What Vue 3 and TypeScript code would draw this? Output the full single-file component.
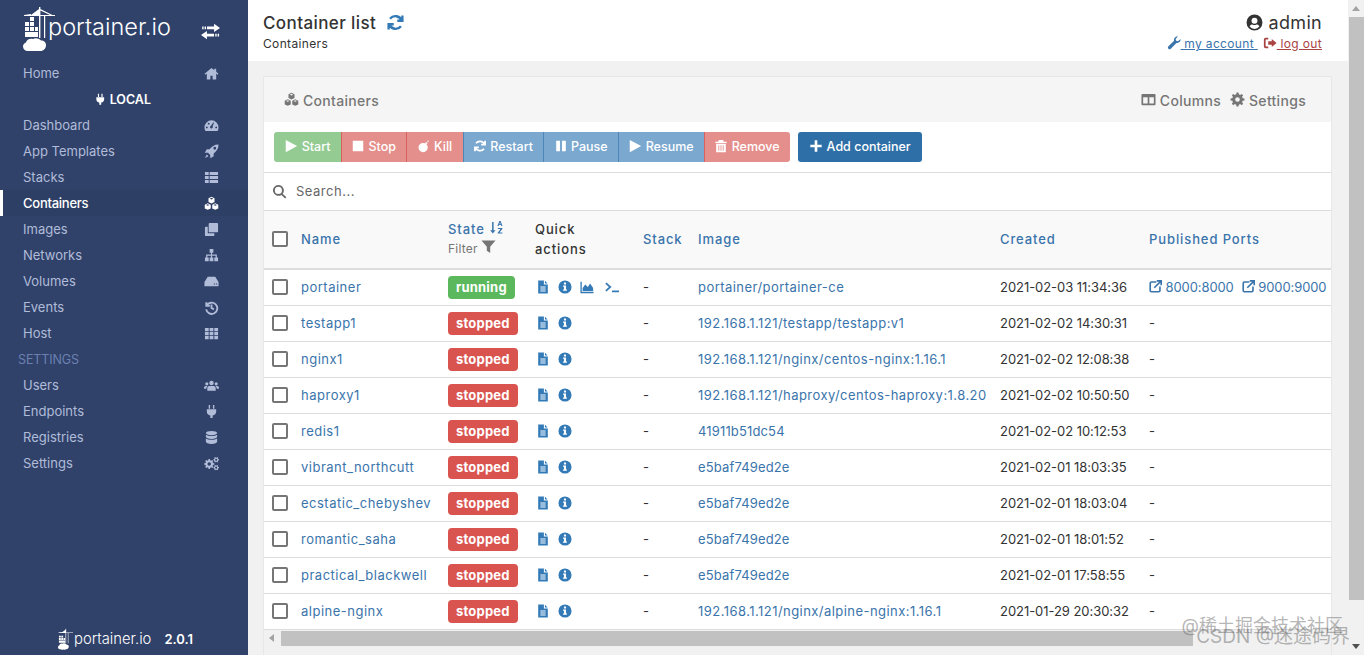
<template>
  <div class="page">
    <aside class="sidebar">
      <div class="brand">
        <svg class="logo" viewBox="0 0 32 44">
          <path d="M16 0h1.4v8H32v1H17.4v22H16V9H8v-1l8-6zM1 8l7-1v2H1zM21 9h1.2v22H21zM17.4 2l12 6h-2.4l-9.6-4.6z" />
          <path d="M2 15h4v4H2zM7 15h4v4H7zM2 20h4v4H2zM7 20h4v4H7zM12 20h3v4h-3zM2 25h13v5H2zM7 10h4v4H7z" />
          <path d="M5 44c-3 0-5-2-5-4.500 0-2 1.500-3.500 3-4 .5-3 4-4.500 7-3.500 2-1.500 6-1 8 1.500 3 0 5 2 5 4.500 0 3.500-2.500 6-5.500 6-2 1-4 1-5.500.2-2 .8-5 .8-7-.2z" />
        </svg>
        <span class="brand-text">portainer.io</span>
        <Ic n="exchange" class="toggle" />
      </div>
      <nav class="nav">
        <a v-for="item in navTop" :key="item.label" class="nav-row" :class="{ active: item.active }">
          <span>{{ item.label }}</span><Ic :n="item.icon" />
        </a>
        <div class="endpoint"><Ic n="plug" /> LOCAL</div>
        <a v-for="item in navLocal" :key="item.label" class="nav-row" :class="{ active: item.active }">
          <span>{{ item.label }}</span><Ic :n="item.icon" />
        </a>
        <div class="nav-title">SETTINGS</div>
        <a v-for="item in navSettings" :key="item.label" class="nav-row">
          <span>{{ item.label }}</span><Ic :n="item.icon" />
        </a>
      </nav>
      <div class="side-foot">
        <svg class="logo small" viewBox="0 0 32 44">
          <path d="M16 0h1.400v8H32v1H17.400v22H16V9H8v-1l8-6zM1 8l7-1v2H1zM21 9h1.200v22H21z" />
          <path d="M2 15h4v4H2zM7 15h4v4H7zM2 20h4v4H2zM7 20h4v4H7zM12 20h3v4h-3zM2 25h13v5H2z" />
          <path d="M5 44c-3 0-5-2-5-4.500 0-2 1.500-3.500 3-4 .5-3 4-4.500 7-3.500 2-1.500 6-1 8 1.500 3 0 5 2 5 4.500 0 3.500-2.500 6-5.500 6-2 1-4 1-5.500.2-2 .8-5 .8-7-.2z" />
        </svg>
        <span class="foot-text">portainer.io</span>
        <span class="version">2.0.1</span>
      </div>
    </aside>

    <main class="main">
      <header class="topbar">
        <div>
          <div class="page-title">Container list <Ic n="refresh" class="refresh" /></div>
          <div class="crumb">Containers</div>
        </div>
        <div class="user">
          <div class="user-name"><Ic n="userCircle" /> admin</div>
          <div class="user-links">
            <a class="account"><Ic n="wrench" /> my account </a>
            <a class="logout"><Ic n="signOut" /> log out</a>
          </div>
        </div>
      </header>

      <section class="widget">
        <div class="widget-head">
          <span class="widget-title"><Ic n="cubes" /> Containers</span>
          <span class="widget-tools">
            <span><Ic n="columns" /> Columns</span>
            <span><Ic n="cog" /> Settings</span>
          </span>
        </div>

        <div class="actions">
          <div class="btn-group">
            <button v-for="b in buttons" :key="b.label" class="btn" :class="b.kind"><Ic :n="b.icon" /> {{ b.label }}</button>
          </div>
          <button class="btn add"><Ic n="plus" /> Add container</button>
        </div>

        <div class="search"><Ic n="search" /> <span>Search...</span></div>

        <table class="grid">
          <colgroup>
            <col style="width: 176px" /><col style="width: 87px" /><col style="width: 108px" /><col style="width: 55px" />
            <col style="width: 302px" /><col style="width: 149px" /><col />
          </colgroup>
          <thead>
            <tr>
              <th><span class="name-cell"><i class="check"></i><a>Name</a></span></th>
              <th>
                <a>State <Ic n="sortAlpha" /></a>
                <div class="filter">Filter <Ic n="filter" /></div>
              </th>
              <th class="plain">Quick<br />actions</th>
              <th><a>Stack</a></th>
              <th><a>Image</a></th>
              <th><a>Created</a></th>
              <th><a>Published Ports</a></th>
            </tr>
          </thead>
          <tbody>
            <tr v-for="c in containers" :key="c.name">
              <td><span class="name-cell"><i class="check"></i><a class="cname">{{ c.name }}</a></span></td>
              <td><span class="badge" :class="c.state">{{ c.state }}</span></td>
              <td>
                <span class="quick">
                  <Ic n="file" /><Ic n="info" />
                  <template v-if="c.state === 'running'"><Ic n="chart" /><Ic n="terminal" class="term" /></template>
                </span>
              </td>
              <td>-</td>
              <td><a class="image" :class="{ hash: !c.image.includes('/') }">{{ c.image }}</a></td>
              <td class="date">{{ c.created }}</td>
              <td>
                <span v-if="c.ports" class="ports">
                  <a v-for="p in c.ports" :key="p"><Ic n="external" /> {{ p }}</a>
                </span>
                <template v-else>-</template>
              </td>
            </tr>
          </tbody>
        </table>

        <div class="hscroll">
          <i class="arrow-left"></i>
          <div class="hthumb"></div>
        </div>
      </section>
    </main>

    <div class="vscroll">
      <i class="arrow-up"></i>
      <div class="vthumb"></div>
      <i class="arrow-down"></i>
    </div>

    <div class="watermark">
      <div class="wm1">@稀土掘金技术社区</div>
      <div class="wm2">CSDN @迷途码界</div>
    </div>
  </div>
</template>

<script setup lang="ts">
import { h } from 'vue';
import type { FunctionalComponent } from 'vue';

// builds a gear outline, used by the cog icons
const gear = (cx: number, cy: number, r: number, teeth: number, hole: number) => {
  const pts: string[] = [];
  const step = (Math.PI * 2) / teeth;
  for (let i = 0; i < teeth; i++) {
    const a = i * step;
    [
      [a - step * 0.32, r * 0.76],
      [a - step * 0.18, r],
      [a + step * 0.18, r],
      [a + step * 0.32, r * 0.76]
    ].forEach(([t, d]) => pts.push(`${(cx + Math.cos(t) * d).toFixed(2)} ${(cy + Math.sin(t) * d).toFixed(2)}`));
  }
  return `M${pts.join('L')}zM${cx - hole} ${cy}a${hole} ${hole} 0 1 0 ${hole * 2} 0a${hole} ${hole} 0 1 0 ${-hole * 2} 0z`;
};

// little cube: hexagon with a hollow top face
const cube = (x: number, y: number) =>
  `M${x} ${y - 3.6}l3.200 1.500v4l-3.200 1.500-3.200-1.500v-4zM${x} ${y - 2.600}l-1.900.9 1.900.9 1.900-.9z`;

const icons: Record<string, { d: string; line?: boolean }> = {
  home: { d: 'M8 2 .6 8.200l.9 1L3 8v6.500h3.800v-4h2.400v4H13V8l1.500 1.200.9-1L13 6.200V3h-2v1.500z' },
  exchange: { d: 'M11 1.500 16 5l-5 3.500V6.200H5V3.800h6zM5 7.500V9.800h6v2.400H5v2.300L0 11zM1 3.800h1.200v2.400H1zM3 3.800h1.200v2.400H3zM12 9.800h1.200v2.400H12zM14 9.800h1.200v2.400H14z' },
  plug: { d: 'M5 1h1.500v4H5zM9.500 1H11v4H9.500zM3 5.500h10V8c0 2.500-1.500 4-3.800 4.300V15H6.800v-2.700C4.500 12 3 10.500 3 8z' },
  dashboard: { d: 'M8 2.500a7.500 7.500 0 0 0-7.500 7.500c0 1.500.4 2.700 1.100 3.800h12.800c.7-1.100 1.100-2.300 1.100-3.800A7.500 7.500 0 0 0 8 2.500zM7.500 8.200 9.900 4.700l.8.4-1.500 3.800a1.500 1.500 0 1 1-1.700-.7zM3 9a1 1 0 1 1 0 2 1 1 0 0 1 0-2zM5 5a1 1 0 1 1 0 2 1 1 0 0 1 0-2zM13 9a1 1 0 1 1 0 2 1 1 0 0 1 0-2z' },
  rocket: { d: 'M15.500.5c-4.500 0-7.500 2.200-9.500 5.200H3L.8 9.200l3.500.2 2.300 2.300.2 3.500L10.300 13v-3c3-2 5.200-5 5.200-9.500zM11.500 3a1.500 1.500 0 1 1 0 3 1.500 1.500 0 0 1 0-3zM3 11.200l1.800 1.800L1 15z' },
  list: { d: 'M1 2.200h4v3.200H1zM6 2.200h9v3.200H6zM1 6.400h4v3.200H1zM6 6.400h9v3.200H6zM1 10.600h4v3.200H1zM6 10.600h9v3.200H6z' },
  cubes: { d: cube(8, 4.500) + cube(4, 11.300) + cube(12, 11.300) },
  clone: { d: 'M6 1h8a1 1 0 0 1 1 1v8a1 1 0 0 1-1 1H6a1 1 0 0 1-1-1V2a1 1 0 0 1 1-1zM2 5h2v6.500a.5.5 0 0 0 .5.5H11v2a1 1 0 0 1-1 1H2a1 1 0 0 1-1-1V6a1 1 0 0 1 1-1z' },
  sitemap: { d: 'M6 1h4v4H8.600v2h5.100v3H15v4h-4v-4h1.400V8.300H8.600V10H10v4H6v-4h1.400V8.300H3.600V10H5v4H1v-4h1.300V7h5.100V5H6z' },
  hdd: { d: 'M4 3h8l3.500 5.500V13H.5V8.500zM10.400 10h1.300v1.300h-1.300zM12.700 10H14v1.300h-1.300z' },
  history: { d: 'M2.500 2.500v3.700h3.700M2.900 6a6 6 0 1 1-.6 4M8 4.700v3.800l2.600 1.500', line: true },
  th: { d: 'M1 2h4v3.500H1zM6 2h4v3.500H6zM11 2h4v3.500h-4zM1 6.300h4v3.500H1zM6 6.300h4v3.500H6zM11 6.300h4v3.500h-4zM1 10.600h4v3.500H1zM6 10.600h4v3.500H6zM11 10.600h4v3.500h-4z' },
  users: { d: 'M8 3a2.400 2.400 0 1 1 0 4.800A2.400 2.400 0 0 1 8 3zM3 4.500a1.700 1.700 0 1 1 0 3.400 1.700 1.700 0 0 1 0-3.400zM13 4.500a1.700 1.700 0 1 1 0 3.400 1.700 1.700 0 0 1 0-3.400zM5.500 8.500h5c1.300 0 2 1 2 2.500v2.500h-9V11c0-1.500.7-2.500 2-2.500zM2 8.500h1.800C3 9.200 2.500 10 2.500 11.500H0V10.500C0 9.300.8 8.500 2 8.500zM12.200 8.500H14c1.200 0 2 .8 2 2v1h-2.500c0-1.500-.5-2.300-1.300-3z' },
  database: { d: 'M8 1c3.500 0 6 1 6 2.300S11.500 5.600 8 5.600 2 4.600 2 3.300 4.500 1 8 1zM2 5c1.200 1 3.400 1.500 6 1.500S12.800 6 14 5v2.300c0 1.300-2.500 2.300-6 2.300S2 8.600 2 7.300zM2 9c1.200 1 3.400 1.500 6 1.500s4.800-.5 6-1.500v3.300c0 1.500-2.500 2.700-6 2.700s-6-1.200-6-2.700z' },
  cogs: { d: gear(5.600, 8.500, 5.400, 8, 1.900) + gear(13, 4, 3, 6, 1.100) + gear(13, 12.400, 3, 6, 1.100) },
  cog: { d: gear(8, 8, 7.500, 8, 2.500) },
  refresh: { d: 'M13.800 2.200v4.300H9.500M2.200 13.800V9.500h4.300M13.200 6.300A5.700 5.700 0 0 0 3.400 4.800M2.800 9.700a5.700 5.700 0 0 0 9.800 1.500', line: true },
  userCircle: { d: 'M8 .5a7.500 7.500 0 1 1 0 15 7.500 7.500 0 0 1 0-15zM8 3.500a2.800 2.800 0 1 0 0 5.600 2.800 2.800 0 0 0 0-5.600zM8 14a6 6 0 0 0 4.600-2.200C12 10.500 11 9.900 10 9.900c-.6.300-1.200.5-2 .5s-1.400-.2-2-.5c-1 0-2 .6-2.600 1.900A6 6 0 0 0 8 14z' },
  wrench: { d: 'M15.500 3.500c.4 2.800-2 5-4.700 4.400L4.300 14.500a1.800 1.800 0 0 1-2.700-2.700l6.500-6.500C7.500 2.500 9.800.2 12.500.6L9.800 3.300l.6 2.200 2.200.6z' },
  signOut: { d: 'M6 2v2H3.500C3 4 3 4.500 3 4.500v7s0 .5.5.5H6v2H3a2 2 0 0 1-2-2V4a2 2 0 0 1 2-2zM10 3.500 15.500 8 10 12.500V10H6V6h4z' },
  columns: { d: 'M1.500 2h13a1 1 0 0 1 1 1v10a1 1 0 0 1-1 1h-13a1 1 0 0 1-1-1V3a1 1 0 0 1 1-1zM2.300 5.500v6.700h4.800V5.500zM8.900 5.500v6.700h4.800V5.500z' },
  play: { d: 'M2 1l13 7-13 7z' },
  stop: { d: 'M2 2h12v12H2z' },
  bomb: { d: 'M7 4.500a5.300 5.300 0 1 1 0 10.600A5.300 5.300 0 0 1 7 4.500zM10.500 3.500l1.500 1.500-1.200 1.200-1.500-1.500zM12.500 1.500l1 .4-.9 2.100-1-.5z' },
  refreshBtn: { d: 'M13.800 2v4.500H9.300M2.200 14V9.500h4.500M13.200 6.300A5.700 5.700 0 0 0 3.400 4.800M2.800 9.700a5.700 5.700 0 0 0 9.800 1.500', line: true },
  pause: { d: 'M2.500 2h4.300v12H2.500zM9.200 2h4.300v12H9.200z' },
  trash: { d: 'M5.500 1h5l.8 2H14.500v1.500h-13V3h3.200zM2.500 5.500h11V15h-11zM5 7v6.500h1V7zM7.500 7v6.500h1V7zM10 7v6.500h1V7z' },
  plus: { d: 'M6.500 1.500h3v5h5v3h-5v5h-3v-5h-5v-3h5z' },
  search: { d: 'M6.800 1a5.800 5.800 0 0 1 4.600 9.300l3.900 3.900-1.300 1.300-3.900-3.900A5.800 5.800 0 1 1 6.800 1zM6.800 3a3.800 3.800 0 1 0 0 7.600 3.800 3.800 0 0 0 0-7.600z' },
  sortAlpha: { d: 'M3.300 2h1.600v9h2L4.100 14.500 1.200 11h2.100zM11 1h1.400l2 5.500h-1.300l-.4-1.100h-2l-.4 1.100H9zM11.700 2.500l-.6 2h1.200zM9.500 8.500h4.700v1l-3 3.800h3.100v1.200H9.300v-1l3-3.800H9.500z' },
  filter: { d: 'M.5 1.500h15L9.800 8.200V15l-3.600-2.500V8.200z' },
  file: { d: 'M2.500 .5H9v4.500h4.500v10.500h-11zM10.200 .8 13.300 4h-3.100zM5 7.500v1.100h6V7.500zM5 9.800v1.100h6V9.800zM5 12.100v1.100h6v-1.100z' },
  info: { d: 'M8 .5a7.500 7.500 0 1 1 0 15 7.500 7.500 0 0 1 0-15zM6.800 2.800v2.400h2.400V2.800zM5.800 6.400v1.400h1v3H5.800v1.500h4.400v-1.500h-1V6.400z' },
  chart: { d: 'M.5 2H2v11.500h13.500V15H.5zM3 12.500V9l3-4 3 3 2.500-4L15 9v3.500z' },
  terminal: { d: 'M1 3.500l5 4.500-5 4.500M8 13h8', line: true },
  external: { d: 'M9 2.500H3A1.500 1.500 0 0 0 1.500 4v9A1.500 1.500 0 0 0 3 14.500h9a1.500 1.500 0 0 0 1.500-1.500V8M9.500 1h5.500v5.500M15 1 6.500 9.500', line: true }
};

const Ic: FunctionalComponent<{ n: string }> = (props) => {
  const icon = icons[props.n];
  return h('svg', { class: icon.line ? 'ic ic-line' : 'ic', viewBox: '0 0 16 16' }, [
    h('path', { d: icon.d, 'fill-rule': 'evenodd' })
  ]);
};
Ic.props = ['n'];

interface NavItem {
  label: string;
  icon: string;
  active?: boolean;
}

const navTop: NavItem[] = [{ label: 'Home', icon: 'home' }];

const navLocal: NavItem[] = [
  { label: 'Dashboard', icon: 'dashboard' },
  { label: 'App Templates', icon: 'rocket' },
  { label: 'Stacks', icon: 'list' },
  { label: 'Containers', icon: 'cubes', active: true },
  { label: 'Images', icon: 'clone' },
  { label: 'Networks', icon: 'sitemap' },
  { label: 'Volumes', icon: 'hdd' },
  { label: 'Events', icon: 'history' },
  { label: 'Host', icon: 'th' }
];

const navSettings: NavItem[] = [
  { label: 'Users', icon: 'users' },
  { label: 'Endpoints', icon: 'plug' },
  { label: 'Registries', icon: 'database' },
  { label: 'Settings', icon: 'cogs' }
];

const buttons = [
  { label: 'Start', icon: 'play', kind: 'success' },
  { label: 'Stop', icon: 'stop', kind: 'danger' },
  { label: 'Kill', icon: 'bomb', kind: 'danger' },
  { label: 'Restart', icon: 'refreshBtn', kind: 'primary' },
  { label: 'Pause', icon: 'pause', kind: 'primary' },
  { label: 'Resume', icon: 'play', kind: 'primary' },
  { label: 'Remove', icon: 'trash', kind: 'danger' }
];

const containers = [
  { name: 'portainer', state: 'running', image: 'portainer/portainer-ce', created: '2021-02-03 11:34:36', ports: ['8000:8000', '9000:9000'] },
  { name: 'testapp1', state: 'stopped', image: '192.168.1.121/testapp/testapp:v1', created: '2021-02-02 14:30:31' },
  { name: 'nginx1', state: 'stopped', image: '192.168.1.121/nginx/centos-nginx:1.16.1', created: '2021-02-02 12:08:38' },
  { name: 'haproxy1', state: 'stopped', image: '192.168.1.121/haproxy/centos-haproxy:1.8.20', created: '2021-02-02 10:50:50' },
  { name: 'redis1', state: 'stopped', image: '41911b51dc54', created: '2021-02-02 10:12:53' },
  { name: 'vibrant_northcutt', state: 'stopped', image: 'e5baf749ed2e', created: '2021-02-01 18:03:35' },
  { name: 'ecstatic_chebyshev', state: 'stopped', image: 'e5baf749ed2e', created: '2021-02-01 18:03:04' },
  { name: 'romantic_saha', state: 'stopped', image: 'e5baf749ed2e', created: '2021-02-01 18:01:52' },
  { name: 'practical_blackwell', state: 'stopped', image: 'e5baf749ed2e', created: '2021-02-01 17:58:55' },
  { name: 'alpine-nginx', state: 'stopped', image: '192.168.1.121/nginx/alpine-nginx:1.16.1', created: '2021-01-29 20:30:32' }
];
</script>

<style>
html,
body {
  margin: 0;
  overflow: hidden;
}
</style>

<style scoped>
.page {
  position: relative;
  display: flex;
  width: 1364px;
  height: 655px;
  overflow: hidden;
  font-family: Inter, 'Noto Sans CJK SC', sans-serif;
  font-size: 13px;
  color: #333;
  background: #f1f1f1;
}

.ic {
  width: 1em;
  height: 1em;
  fill: currentColor;
  vertical-align: -0.12em;
  flex: none;
}

.ic-line {
  fill: none;
  stroke: currentColor;
  stroke-width: 2;
}

a {
  color: #3a74ab;
  text-decoration: none;
}

/* sidebar */
.sidebar {
  display: flex;
  flex-direction: column;
  flex: none;
  width: 248px;
  background: #30426a;
  color: #b1bcd9;
}

.brand {
  display: flex;
  align-items: flex-start;
  height: 60px;
  box-sizing: border-box;
  padding: 7px 28px 0 23px;
  color: #fff;
}

.logo {
  width: 32px;
  height: 44px;
  flex: none;
  fill: #fff;
}

.brand-text {
  margin: 5px 0 0 -7px;
  font-size: 23.500px;
  font-weight: 300;
  line-height: 30px;
}

.toggle {
  margin: 15px 0 0 auto;
  font-size: 19px;
}

.nav {
  flex: 1;
}

.nav-row {
  display: flex;
  align-items: center;
  justify-content: space-between;
  height: 26px;
  padding: 0 29px 0 23px;
  color: #b1bcd9;
}

.nav-row .ic {
  font-size: 15px;
}

.nav-row.active {
  color: #fff;
  font-weight: 500;
  letter-spacing: -0.25px;
  background: #2e3f66;
  box-shadow: inset 3px 0 0 #fff;
}

.endpoint {
  height: 26px;
  padding-top: 1px;
  box-sizing: border-box;
  line-height: 26px;
  text-align: center;
  color: #fff;
  font-size: 12.500px;
  font-weight: 600;
  padding-right: 3px;
}

.nav-title {
  height: 26px;
  box-sizing: border-box;
  padding-top: 1px;
  line-height: 26px;
  padding-left: 18px;
  font-size: 12.500px;
  letter-spacing: -0.1px;
  color: #6b80b0;
}

.side-foot {
  display: flex;
  align-items: center;
  height: 30px;
  padding: 0 0 1px 58px;
  color: #fff;
}

.logo.small {
  width: 15px;
  height: 28px;
}

.foot-text {
  margin-left: 1px;
  font-size: 14.800px;
  font-weight: 300;
}

.version {
  margin-left: 13px;
  font-size: 13px;
  font-weight: 600;
}

/* main area */
.main {
  flex: 1;
  min-width: 0;
}

.topbar {
  display: flex;
  justify-content: space-between;
  height: 61px;
  box-sizing: border-box;
  padding: 13px 26px 0 15px;
  background: #fff;
}

.page-title {
  font-size: 17px;
  font-weight: 500;
  letter-spacing: 0.4px;
  line-height: 20px;
}

.refresh {
  margin-left: 5px;
  font-size: 19px;
  vertical-align: -3px;
  color: #337ab7;
}

.crumb {
  margin-top: 3px;
  font-size: 12px;
  letter-spacing: 0.35px;
  line-height: 16px;
}

.user {
  text-align: right;
}

.user-name {
  font-size: 18px;
  letter-spacing: 0.3px;
  line-height: 20px;
}

.user-name .ic {
  font-size: 17px;
}

.user-links {
  margin-top: 3px;
  font-size: 12px;
  letter-spacing: 0.35px;
  line-height: 16px;
}

.user-links a {
  text-decoration: underline;
}

.user-links .ic {
  font-size: 14px;
}

.logout {
  margin-left: 5px;
  color: #a94442;
}

.widget {
  margin: 15px 16px 0 15px;
  border: 1px solid #e7e7e7;
  height: 600px;
}

.widget-head {
  display: flex;
  align-items: center;
  justify-content: space-between;
  height: 45px;
  padding: 1px 25px 0 20px;
  box-sizing: border-box;
  background: #f5f5f5;
  color: #767676;
  font-size: 14px;
  font-weight: 500;
  letter-spacing: 0.3px;
}

.widget-title .ic,
.widget-tools .ic {
  font-size: 15px;
}

.widget-tools {
  display: flex;
  gap: 9px;
}

.actions {
  display: flex;
  gap: 8px;
  height: 51px;
  box-sizing: border-box;
  padding: 10px 10px 0;
  border-bottom: 1px solid #ddd;
  background: #fff;
}

.btn-group {
  display: flex;
}

.btn {
  height: 30px;
  padding: 0 10.350px 1px;
  border: 0;
  color: #fff;
  font-family: inherit;
  font-size: 12.500px;
  font-weight: 500;
  white-space: nowrap;
}

.btn .ic {
  font-size: 14px;
  vertical-align: -2px;
}

.btn-group .btn:first-child {
  border-radius: 3px 0 0 3px;
}

.btn-group .btn:last-child {
  border-radius: 0 3px 3px 0;
}

.success {
  background: #93cb93;
}

.danger {
  background: #e58f8c;
  box-shadow: inset 1px 0 0 #d9605c;
}

.primary {
  background: #7ba8cf;
  box-shadow: inset 1px 0 0 #4f86b8;
}

.add {
  width: 124px;
  padding: 0 0 1px;
  border-radius: 3px;
  background: #2e6fa7;
}

.search {
  display: flex;
  align-items: center;
  gap: 9px;
  height: 38px;
  box-sizing: border-box;
  padding: 0 8px 1px;
  border-bottom: 1px solid #ddd;
  background: #fff;
  color: #666;
  letter-spacing: 0.5px;
}

.search .ic {
  font-size: 15px;
}

.grid {
  width: 100%;
  table-layout: fixed;
  border-collapse: collapse;
  white-space: nowrap;
  background: #fff;
}

.grid th {
  height: 55px;
  padding: 0 8px 2px;
  border-bottom: 2px solid #ddd;
  background: #f9f9f9;
  text-align: left;
  font-weight: 500;
  letter-spacing: 0.9px;
  line-height: 20px;
}

.grid th .ic {
  font-size: 15px;
}

.grid td {
  height: 33px;
  padding: 0 8px 2px;
  border-bottom: 1px solid #ddd;
}

.filter {
  font-size: 12px;
  font-weight: 400;
  letter-spacing: 0.2px;
  color: #767676;
}

.name-cell {
  display: flex;
  align-items: center;
  gap: 13px;
}

.cname {
  letter-spacing: 0.5px;
}

td .check {
  margin-top: 1px;
}

.image {
  letter-spacing: 0.45px;
}

.image.hash {
  letter-spacing: 0.15px;
}

.date {
  letter-spacing: -0.05px;
}

.check {
  flex: none;
  width: 16px;
  height: 16px;
  box-sizing: border-box;
  border: 2px solid #767676;
  border-radius: 2px;
  background: #fff;
}

.badge {
  display: inline-block;
  height: 23px;
  margin-top: 2px;
  padding: 0 8px;
  border-radius: 4px;
  color: #fff;
  font-size: 13px;
  font-weight: 700;
  letter-spacing: 0.2px;
  line-height: 22px;
}

.running {
  background: #5cb85c;
}

.stopped {
  background: #d9534f;
}

.quick {
  display: flex;
  align-items: center;
  gap: 8px;
  margin-left: 1px;
  font-size: 14px;
  color: #337ab7;
}

.term {
  width: 18px;
  margin-left: 1px;
}

.ports {
  display: flex;
  gap: 8px;
  letter-spacing: -0.1px;
}

.hscroll {
  display: flex;
  align-items: center;
  height: 16px;
  background: #f1f1f1;
}

.arrow-left {
  width: 0;
  height: 0;
  margin-left: 5px;
  border: 4px solid transparent;
  border-left-width: 0;
  border-right: 5px solid #a3a3a3;
}

.hthumb {
  width: 912px;
  height: 15px;
  margin-left: 7px;
  background: #c1c1c1;
}

.vscroll {
  display: flex;
  flex-direction: column;
  align-items: center;
  flex: none;
  width: 16px;
  background: #f1f1f1;
}

.arrow-up,
.arrow-down {
  width: 0;
  height: 0;
  margin: 6px 0;
  border: 4px solid transparent;
}

.arrow-up {
  border-top-width: 0;
  border-bottom: 5px solid #a3a3a3;
}

.arrow-down {
  border-bottom-width: 0;
  border-top: 5px solid #505050;
  margin-top: auto;
}

.vthumb {
  width: 15px;
  height: 583px;
  background: #c1c1c1;
}

/* watermark sits over everything, its two lines overlap like the source */
.watermark {
  position: absolute;
  right: 14px;
  bottom: 8px;
  text-align: right;
  color: rgba(110, 110, 110, 0.5);
  pointer-events: none;
}

.wm1 {
  margin-right: 7px;
  font-size: 18px;
  line-height: 18px;
}

.wm2 {
  margin-top: -8px;
  font-size: 19px;
  line-height: 20px;
}
</style>
